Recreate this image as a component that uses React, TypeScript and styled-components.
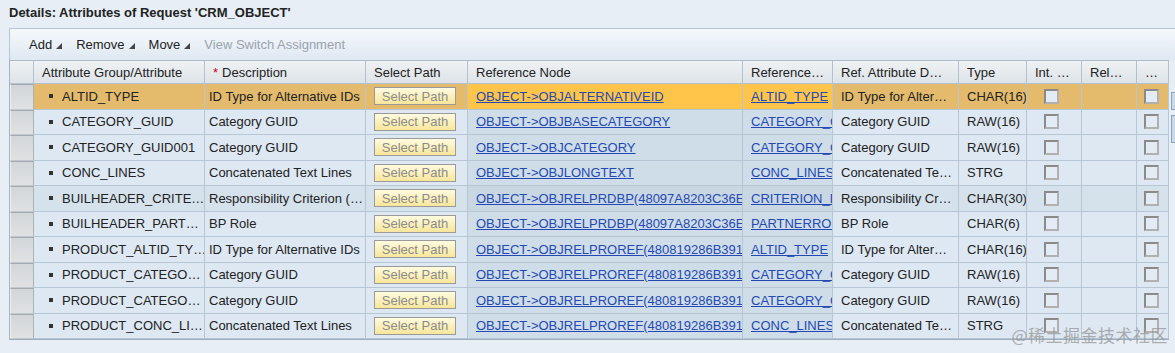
import React from "react";
import styled, { createGlobalStyle } from "styled-components";

const GlobalStyle = createGlobalStyle`
  html, body {
    margin: 0;
    padding: 0;
    background: #e7eef5;
    font-family: "Liberation Sans", Arial, sans-serif;
    font-size: 13px;
    color: #222;
  }
`;

const COLS = "24px 171px 161px 102px 275px 90px 126px 68px 55px 55px 32px";

type RowData = {
  attr: string;
  desc: string;
  node: string;
  ref: string;
  refDesc: string;
  type: string;
};

const rows: RowData[] = [
  { attr: "ALTID_TYPE", desc: "ID Type for Alternative IDs", node: "OBJECT->OBJALTERNATIVEID", ref: "ALTID_TYPE", refDesc: "ID Type for Alter…", type: "CHAR(16)" },
  { attr: "CATEGORY_GUID", desc: "Category GUID", node: "OBJECT->OBJBASECATEGORY", ref: "CATEGORY_GUID", refDesc: "Category GUID", type: "RAW(16)" },
  { attr: "CATEGORY_GUID001", desc: "Category GUID", node: "OBJECT->OBJCATEGORY", ref: "CATEGORY_GUID", refDesc: "Category GUID", type: "RAW(16)" },
  { attr: "CONC_LINES", desc: "Concatenated Text Lines", node: "OBJECT->OBJLONGTEXT", ref: "CONC_LINES", refDesc: "Concatenated Te…", type: "STRG" },
  { attr: "BUILHEADER_CRITE…", desc: "Responsibility Criterion (…", node: "OBJECT->OBJRELPRDBP(48097A8203C36E1B", ref: "CRITERION_DESCR", refDesc: "Responsibility Cr…", type: "CHAR(30)" },
  { attr: "BUILHEADER_PART…", desc: "BP Role", node: "OBJECT->OBJRELPRDBP(48097A8203C36E1B", ref: "PARTNERROLE", refDesc: "BP Role", type: "CHAR(6)" },
  { attr: "PRODUCT_ALTID_TY…", desc: "ID Type for Alternative IDs", node: "OBJECT->OBJRELPROREF(480819286B3912A", ref: "ALTID_TYPE", refDesc: "ID Type for Alter…", type: "CHAR(16)" },
  { attr: "PRODUCT_CATEGO…", desc: "Category GUID", node: "OBJECT->OBJRELPROREF(480819286B3912A", ref: "CATEGORY_GUID", refDesc: "Category GUID", type: "RAW(16)" },
  { attr: "PRODUCT_CATEGO…", desc: "Category GUID", node: "OBJECT->OBJRELPROREF(480819286B3912A", ref: "CATEGORY_GUID", refDesc: "Category GUID", type: "RAW(16)" },
  { attr: "PRODUCT_CONC_LI…", desc: "Concatenated Text Lines", node: "OBJECT->OBJRELPROREF(480819286B3912A", ref: "CONC_LINES", refDesc: "Concatenated Te…", type: "STRG" },
];

const Page = styled.div`
  position: relative;
  width: 1175px;
  height: 353px;
  overflow: hidden;
`;

const Title = styled.div`
  font-weight: bold;
  padding: 5px 0 0 9px;
  height: 18px;
  line-height: 15px;
`;

const Panel = styled.div`
  margin: 5px 0 0 9px;
  display: flex;
  flex-direction: column;
`;

const Toolbar = styled.div`
  height: 31px;
  border: 1px solid #b4c6d6;
  border-right: none;
  border-bottom: none;
  background: linear-gradient(#f4f8fb, #dfe9f2);
  display: flex;
  align-items: center;
  padding-left: 19px;
  gap: 14px;
`;

const ToolItem = styled.span<{ $disabled?: boolean }>`
  display: inline-flex;
  align-items: center;
  gap: 4px;
  color: ${(p) => (p.$disabled ? "#9aa3ad" : "#222")};
`;

const Caret = () => (
  <svg width="6" height="6" viewBox="0 0 6 6" style={{ marginTop: 3 }}>
    <polygon points="6,0 6,6 0,6" fill="#444" />
  </svg>
);

const TableWrap = styled.div`
  display: flex;
`;

const Grid = styled.div`
  display: flex;
  flex-direction: column;
  border-left: 1px solid #a6b4c2;
  border-bottom: 1px solid #9eabb8;
`;

const HeaderRow = styled.div`
  display: grid;
  grid-template-columns: ${COLS};
  height: 24px;
`;

const HeaderCell = styled.div`
  background: linear-gradient(#eff2f4, #dde3e8);
  border-right: 1px solid #b4c0cb;
  border-top: 1px solid #aebbc7;
  border-bottom: 1px solid #b4c0cb;
  padding-left: 8px;
  display: flex;
  align-items: center;
  white-space: nowrap;
  overflow: hidden;
  color: #222;
`;

const Star = styled.span`
  color: #d0021b;
  margin-right: 4px;
`;

const DataRow = styled.div`
  display: grid;
  grid-template-columns: ${COLS};
  height: 25.5px;
`;

type Tone = "normal" | "hover" | "selected";

const bg = (tone: Tone, dark?: boolean) => {
  if (tone === "selected") return dark ? "#ffc54b" : "#e4bb6d";
  if (tone === "hover") return dark ? "#c9d7e3" : "#d5e1eb";
  return dark ? "#cfdde9" : "#dde8f3";
};

const Cell = styled.div<{ $tone: Tone; $dark?: boolean; $pad?: number }>`
  background: ${(p) => bg(p.$tone, p.$dark)};
  border-right: 1px solid #b7c6d4;
  border-bottom: 1px solid #b7c6d4;
  padding-left: ${(p) => p.$pad ?? 8}px;
  display: flex;
  align-items: center;
  white-space: nowrap;
  overflow: hidden;
  min-width: 0;
`;

const Selector = styled.div`
  background: linear-gradient(#d3d6d9, #dfe1e3);
  border-top: 1px solid #a3a9ae;
  border-left: 1px solid #eef0f2;
  border-right: 1px solid #aab3bb;
  border-bottom: 1px solid #c1c8ce;
`;

const Bullet = styled.span`
  width: 4px;
  height: 4px;
  background: #333;
  margin: 0 9px 0 15px;
  flex: none;
`;

const PathButton = styled.span`
  display: inline-flex;
  align-items: center;
  justify-content: center;
  width: 80px;
  height: 16px;
  border: 1px solid #9a9a9a;
  background: linear-gradient(#fffbe0, #f7e69a);
  color: #8c8c8c;
`;

const Link = styled.a`
  color: #2449b3;
  text-decoration: underline;
  white-space: nowrap;
`;

const Check = styled.span`
  width: 11px;
  height: 11px;
  border: 2px solid #8f8f8f;
  border-color: #8a8a8a #b0b0b0 #b0b0b0 #8a8a8a;
  background: #e3ecf4;
`;

const Scrollbar = styled.div`
  width: 6px;
  margin-left: 2px;
  display: flex;
  flex-direction: column;
  gap: 5px;
  padding-top: 32px;
`;

const ScrollBox = styled.div<{ $h: number }>`
  height: ${(p) => p.$h}px;
  border: 1px solid #8fa3b6;
  border-right: none;
  background: #c7d9ea;
`;

const Watermark = styled.div`
  position: absolute;
  right: 7px;
  bottom: 6px;
  font-family: "Noto Sans CJK SC", sans-serif;
  font-size: 17px;
  color: rgba(150, 150, 150, 0.75);
  letter-spacing: 0.5px;
`;

const headers = [
  "Attribute Group/Attribute",
  "Description",
  "Select Path",
  "Reference Node",
  "Reference…",
  "Ref. Attribute D…",
  "Type",
  "Int. …",
  "Rel…",
  "…",
];

export default function App() {
  return (
    <Page>
      <GlobalStyle />
      <Title>Details: Attributes of Request 'CRM_OBJECT'</Title>
      <Panel>
        <Toolbar>
          <ToolItem>Add <Caret /></ToolItem>
          <ToolItem>Remove <Caret /></ToolItem>
          <ToolItem>Move <Caret /></ToolItem>
          <ToolItem $disabled>View Switch Assignment</ToolItem>
        </Toolbar>
        <TableWrap>
          <Grid>
            <HeaderRow>
              <HeaderCell />
              {headers.map((h) => (
                <HeaderCell key={h}>
                  {h === "Description" && <Star>*</Star>}
                  {h}
                </HeaderCell>
              ))}
            </HeaderRow>
            {rows.map((r, i) => {
              const tone: Tone = i === 0 ? "selected" : i === 4 ? "hover" : "normal";
              return (
                <DataRow key={i}>
                  <Selector />
                  <Cell $tone={tone} $pad={0}>
                    <Bullet />
                    {r.attr}
                  </Cell>
                  <Cell $tone={tone} $pad={4}>{r.desc}</Cell>
                  <Cell $tone={tone}>
                    <PathButton>Select Path</PathButton>
                  </Cell>
                  <Cell $tone={tone} $dark>
                    <Link>{r.node}</Link>
                  </Cell>
                  <Cell $tone={tone} $dark>
                    <Link>{r.ref}</Link>
                  </Cell>
                  <Cell $tone={tone}>{r.refDesc}</Cell>
                  <Cell $tone={tone}>{r.type}</Cell>
                  <Cell $tone={tone} $pad={17}>
                    <Check />
                  </Cell>
                  <Cell $tone={tone} />
                  <Cell $tone={tone} $pad={7}>
                    <Check />
                  </Cell>
                </DataRow>
              );
            })}
          </Grid>
          <Scrollbar>
            <ScrollBox $h={16} />
            <ScrollBox $h={26} />
            <div style={{ flex: 1 }} />
          </Scrollbar>
        </TableWrap>
      </Panel>
      <Watermark>@稀土掘金技术社区</Watermark>
    </Page>
  );
}
